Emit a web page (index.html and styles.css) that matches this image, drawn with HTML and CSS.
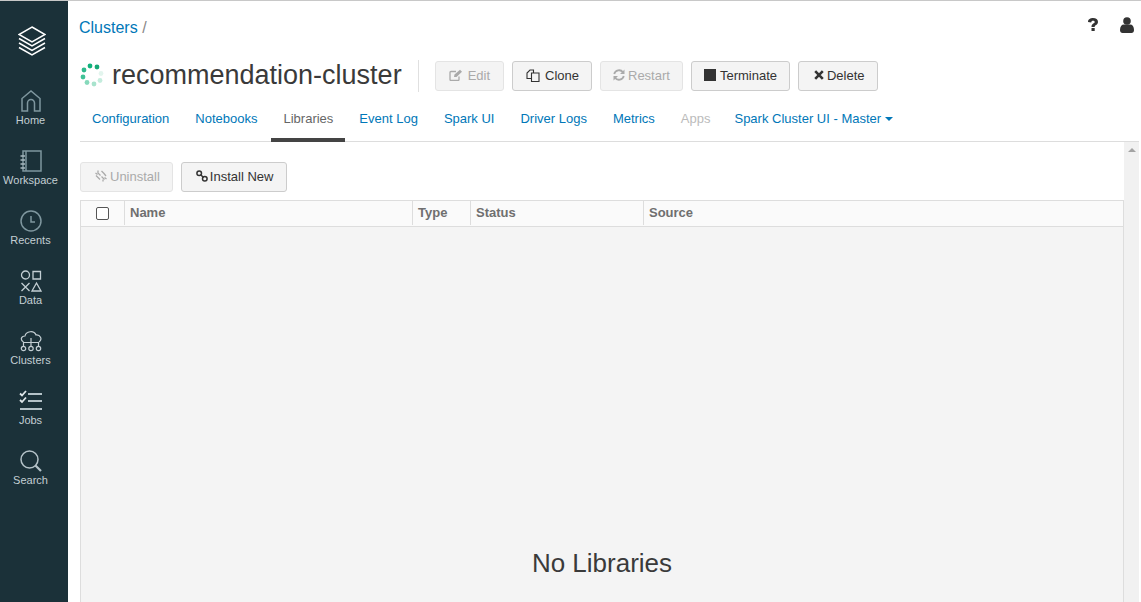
FILE: index.html
```html
<!DOCTYPE html>
<html lang="en">
<head>
  <meta charset="UTF-8">
  <title>recommendation-cluster - Libraries</title>
  <link rel="stylesheet" href="styles.css">
</head>
<body>
  <nav class="sidebar">
    <a class="logo">
      <svg width="28" height="30" viewBox="0 0 28 30" fill="none" stroke="#fff" stroke-width="1.500">
        <path d="M14 1 L27 8.500 L14 16 L1 8.500 Z"/>
        <path d="M1 12.500 L14 20 L27 12.500"/>
        <path d="M1 17 L14 24.500 L27 17"/>
        <path d="M1 21.500 L14 29 L27 21.500"/>
      </svg>
    </a>
    <a class="nav-item">
      <svg width="22" height="22" viewBox="0 0 22 22" fill="none" stroke="#7f979f" stroke-width="1.500">
        <path d="M2 21 V8.500 L11 1 L20 8.500 V21 H14.500 V13 a3.500 3.500 0 0 0 -7 0 V21 Z"/>
      </svg>
      <span>Home</span>
    </a>
    <a class="nav-item">
      <svg width="22" height="22" viewBox="0 0 22 22" fill="none" stroke="#7f979f" stroke-width="1.500">
        <path d="M3 1 H21 V21 H3 Z"/>
        <path d="M6 1 V21" />
        <path d="M0.500 6 H5 M0.500 10 H5 M0.500 14 H5 M0.500 18 H5" stroke="#a8b8be"/>
      </svg>
      <span>Workspace</span>
    </a>
    <a class="nav-item">
      <svg width="22" height="22" viewBox="0 0 22 22" fill="none" stroke="#7f979f" stroke-width="1.500">
        <circle cx="11" cy="11" r="10"/>
        <path d="M11 6 V12 H15"/>
      </svg>
      <span>Recents</span>
    </a>
    <a class="nav-item">
      <svg width="22" height="22" viewBox="0 0 22 22" fill="none" stroke="#c3ced3" stroke-width="1.300">
        <circle cx="5.500" cy="5" r="4"/>
        <path d="M13 1.500 H20.500 V9 H13 Z"/>
        <path d="M1.500 13 L9.500 21 M9.500 13 L1.500 21"/>
        <path d="M16.500 13 L21 21 H12 Z"/>
      </svg>
      <span>Data</span>
    </a>
    <a class="nav-item">
      <svg width="22" height="22" viewBox="0 0 22 22" fill="none" stroke="#c3ced3" stroke-width="1.200">
        <path d="M3.500 12 C0 10 1 6 5 6 C6 1 14 0 16 5 C20 4.500 23 9 19 12"/>
        <path d="M3.500 16 V12.500 H18.500 V16 M11 8 V16"/>
        <circle cx="3.500" cy="18.500" r="2.200"/>
        <circle cx="11" cy="18.500" r="2.200"/>
        <circle cx="18.500" cy="18.500" r="2.200"/>
      </svg>
      <span>Clusters</span>
    </a>
    <a class="nav-item">
      <svg width="24" height="22" viewBox="0 0 24 22" fill="none" stroke="#b4c2c8" stroke-width="2.200">
        <path d="M9 4 H23 M9 11 H23 M1 19 H23"/>
        <path d="M1 3.500 L3 5.500 L7 1 M1 10 L3 12 L7 7.500" stroke="#dfe6e9" stroke-width="1.800"/>
      </svg>
      <span>Jobs</span>
    </a>
    <a class="nav-item">
      <svg width="22" height="22" viewBox="0 0 22 22" fill="none" stroke="#b4c2c8" stroke-width="1.500">
        <circle cx="9.500" cy="9.500" r="8.500"/>
        <path d="M15.500 15.500 L21 21" stroke-width="2.200"/>
      </svg>
      <span>Search</span>
    </a>
  </nav>

  <main class="content">
    <div class="topbar">
      <div class="breadcrumb"><a>Clusters</a> <span>/</span></div>
      <div class="top-icons">
        <svg class="icon-help" width="10" height="14" viewBox="0 0 10 14" fill="#333">
          <path d="M0 4 C0 1 2.500 0 5 0 C8 0 10 1.500 10 4 C10 6 8.500 6.700 7.300 7.500 C6.700 8 6.700 8.500 6.700 9 H3.500 C3.500 7.500 3.700 6.700 5 5.800 C6 5 6.700 4.800 6.700 4 C6.700 3 6 2.700 5 2.700 C4 2.700 3.300 3.300 3.200 4.500 Z"/>
          <rect x="3.500" y="10" width="3.200" height="3"/>
        </svg>
        <svg class="icon-user" width="14" height="16" viewBox="0 0 14 16" fill="#333">
          <circle cx="7" cy="4" r="3.800"/>
          <path d="M0 13 C0 9.500 1.500 7.500 4 7.500 H10 C12.500 7.500 14 9.500 14 13 C14 15 13 16 11.500 16 H2.500 C1 16 0 15 0 13 Z"/>
        </svg>
      </div>
    </div>

    <div class="title-row">
      <svg class="spinner" width="24" height="24" viewBox="0 0 24 24">
        <circle cx="10" cy="3" r="2.400" fill="#0fb27c"/>
        <circle cx="17" cy="4" r="2.400" fill="#16a877"/>
        <circle cx="21" cy="10.500" r="2.400" fill="#e3f5ee"/>
        <circle cx="20" cy="17.500" r="2.400" fill="#c4ecdd"/>
        <circle cx="14" cy="21" r="2.400" fill="#a8e3cd"/>
        <circle cx="7" cy="19.500" r="2.400" fill="#86d9bb"/>
        <circle cx="3" cy="14" r="2.400" fill="#40c297"/>
        <circle cx="4" cy="7" r="2.400" fill="#2eb98c"/>
      </svg>
      <h1>recommendation-cluster</h1>
      <div class="actions">
        <button class="btn btn-edit" disabled>
          <svg width="14" height="12" viewBox="0 0 14 12" fill="none" stroke="currentColor" stroke-width="1.300"><path d="M10 7.500 V10.500 a1 1 0 0 1 -1 1 H2 a1 1 0 0 1 -1 -1 V3.500 a1 1 0 0 1 1 -1 H7"/><path d="M5 8 L5.500 5.500 L11 0.800 L13 2.800 L7.500 8 Z" fill="currentColor" stroke="none"/></svg>
          Edit
        </button>
        <button class="btn btn-clone">
          <svg width="14" height="13" viewBox="0 0 14 13" fill="none" stroke="currentColor" stroke-width="1.100"><path d="M5 9.500 H1 V4 L4 1 H7.500 V4"/><path d="M5.500 4 H13 V12.500 H5.500 Z" fill="#f4f4f4"/></svg>
          Clone
        </button>
        <button class="btn btn-restart" disabled>
          <svg width="12" height="12" viewBox="0 0 12 12" fill="none" stroke="currentColor" stroke-width="1.800"><path d="M1.200 5 A5 5 0 0 1 10 3.200"/><path d="M10.800 7 A5 5 0 0 1 2 8.800"/><path d="M11.500 0.500 V5 H7 Z M0.500 11.500 V7 H5 Z" fill="currentColor" stroke="none"/></svg>
          Restart
        </button>
        <button class="btn">
          <span class="stop"></span>
          Terminate
        </button>
        <button class="btn btn-delete">
          <svg width="10" height="10" viewBox="0 0 10 10" fill="none" stroke="currentColor" stroke-width="2.600"><path d="M1.200 1.200 L8.800 8.800 M8.800 1.200 L1.200 8.800"/></svg>
          Delete
        </button>
      </div>
    </div>

    <ul class="tabs">
      <li><a>Configuration</a></li>
      <li><a>Notebooks</a></li>
      <li class="active"><a>Libraries</a></li>
      <li><a>Event Log</a></li>
      <li><a>Spark UI</a></li>
      <li><a>Driver Logs</a></li>
      <li><a>Metrics</a></li>
      <li class="off"><a>Apps</a></li>
      <li class="last"><a>Spark Cluster UI - Master<i class="caret"></i></a></li>
    </ul>

    <div class="pane">
      <div class="pane-body">
        <div class="toolbar">
          <button class="btn" disabled>
            <svg width="12" height="12" viewBox="0 0 12 12" fill="none" stroke="currentColor" stroke-width="1.300"><path d="M0.500 3 L2.500 4.500 M3 0.500 V2.500 M1 5.500 L2.500 7 L5 9.500 M6.500 1 L9 3.500 L11 6 M8 11.500 V9.500 M11.500 9 L9.500 7.500"/><path d="M2.500 2.500 L5.500 5.500 M6.500 6.500 L9.500 9.500"/></svg>
            Uninstall
          </button>
          <button class="btn btn-install">
            <svg width="12" height="12" viewBox="0 0 12 12" fill="none" stroke="currentColor" stroke-width="1.500"><circle cx="3.200" cy="3.200" r="2.300"/><circle cx="8.800" cy="8.800" r="2.300"/><path d="M4.500 4.500 L7.500 7.500"/></svg>
            Install New
          </button>
        </div>
        <div class="table">
          <div class="table-head">
            <div class="col col-check"><span class="checkbox"></span></div>
            <div class="col col-name">Name</div>
            <div class="col col-type">Type</div>
            <div class="col col-status">Status</div>
            <div class="col col-source">Source</div>
          </div>
          <div class="empty">No Libraries</div>
        </div>
      </div>
      <div class="scrollbar"><i class="arrow"></i></div>
    </div>
  </main>
</body>
</html>
```

FILE: styles.css
```css
* { box-sizing: border-box; }
html, body { height: 100%; }
body {
  margin: 0;
  display: flex;
  height: 602px;
  overflow: hidden;
  font-family: "Liberation Sans", Arial, sans-serif;
  font-size: 13px;
  color: #333;
  background: #fff;
  border-top: 1px solid #c8c8c8;
}

/* left nav */
.sidebar { width: 68px; flex: none; background: #1b3139; }
.logo { display: flex; justify-content: center; width: 64px; padding-top: 25px; height: 89px; }
.nav-item { display: flex; flex-direction: column; align-items: center; width: 61px; height: 60px; color: #c3ced3; font-size: 11px; line-height: 13px; }
.nav-item svg { margin-bottom: 2px; }

.content { flex: 1; min-width: 0; display: flex; flex-direction: column; padding-left: 11px; padding-right: 2px; }

.topbar { display: flex; justify-content: space-between; height: 50px; padding-top: 17px; }
.breadcrumb { font-size: 16px; line-height: 20px; color: #888; }
.breadcrumb a { color: #0077b8; }
.top-icons { display: flex; gap: 22px; padding-right: 5px; align-items: flex-start; }
.icon-user { margin-top: -1px; }

.title-row { display: flex; align-items: center; height: 48px; padding-left: 1px; }
.spinner { flex: none; margin-right: 8px; }
h1 { margin: 0; font-size: 27px; font-weight: 400; line-height: 36px; padding-right: 16px; color: #3a3a3a; }
.actions { display: flex; gap: 8px; border-left: 1px solid #e0e0e0; padding-left: 16px; height: 32px; margin-top: 2px; align-items: center; }

.btn {
  display: inline-flex; align-items: center; gap: 5px;
  height: 30px; padding: 0 12px 2px;
  font: inherit; color: #333;
  background: #f4f4f4;
  border: 1px solid #ccc; border-radius: 3px;
}
.btn[disabled] { color: #aaa; border-color: #e4e4e4; }
.btn-edit { padding-left: 13px; padding-right: 13px; }
.btn-clone { padding-left: 13px; }
.btn-restart { gap: 3px; }
.btn-delete { gap: 3px; padding: 0 12px 2px 15px; }
.stop { width: 12px; height: 12px; background: #333; margin-right: -1px; }

.tabs { display: flex; list-style: none; margin: 0 0 0 1px; padding: 0; height: 43px; border-bottom: 1px solid #ddd; }
.tabs li { padding: 0 12px; margin-right: 2px; line-height: 40px; color: #0077b8; }
.tabs li.active { color: #666; border-bottom: 4px solid #444; height: 43px; }
.tabs li.off { color: #bbb; }
.tabs li.last { margin-left: -2px; }
.caret { display: inline-block; margin-left: 4px; vertical-align: 2px; border: 4px solid transparent; border-top-color: #0077b8; border-bottom: 0; }

.pane { flex: 1; min-height: 0; display: flex; margin-left: 1px; }
.pane-body { flex: 1; min-width: 0; display: flex; flex-direction: column; }
.toolbar { display: flex; gap: 8px; padding-top: 20px; height: 58px; }
.toolbar .btn { gap: 3px; padding: 0 12px 2px 14px; }
.toolbar .btn-install { gap: 2px; padding-right: 13px; }

.table { flex: 1; border: 1px solid #ddd; border-bottom: 0; display: flex; flex-direction: column; background: #f4f4f4; }
.table-head { display: flex; height: 26px; border-bottom: 1px solid #ddd; background: #fafafa; font-weight: 700; color: #6f6f6f; line-height: 24px; flex: none; }
.col { padding-left: 5px; border-left: 1px solid #ddd; height: 24px; }
.col-check { width: 43px; border-left: 0; padding: 6px 0 0 15px; }
.col-name { width: 288px; }
.col-type { width: 58px; }
.col-status { width: 173px; }
.col-source { flex: 1; }
.checkbox { display: block; width: 13px; height: 13px; background: #fff; border: 1px solid #555; border-radius: 2px; }
.empty { flex: 1; text-align: center; font-size: 26px; padding-top: 320px; line-height: 32px; color: #3a3a3a; }

.scrollbar { width: 15px; flex: none; background: #f1f1f1; display: flex; justify-content: center; padding-top: 6px; }
.arrow { width: 0; height: 0; border: 4px solid transparent; border-bottom: 4px solid #a3a3a3; border-top: 0; }
```
